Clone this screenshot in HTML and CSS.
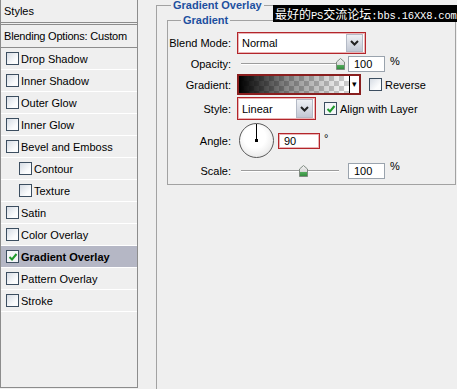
FILE: index.html
```html
<!DOCTYPE html>
<html lang="zh">
<head>
  <meta charset="UTF-8">
  <title>Layer Style - Gradient Overlay</title>
  <link rel="stylesheet" href="styles.css">
</head>
<body>
  <div class="dialog">
    <aside class="styles-panel">
      <div class="panel-head">Styles</div>
      <div class="panel-blend">Blending Options: Custom</div>
      <ul class="fx-list">
        <li><span class="cb"></span>Drop Shadow</li>
        <li><span class="cb"></span>Inner Shadow</li>
        <li><span class="cb"></span>Outer Glow</li>
        <li><span class="cb"></span>Inner Glow</li>
        <li><span class="cb"></span>Bevel and Emboss</li>
        <li class="sub"><span class="cb"></span>Contour</li>
        <li class="sub"><span class="cb"></span>Texture</li>
        <li><span class="cb"></span>Satin</li>
        <li><span class="cb"></span>Color Overlay</li>
        <li class="active"><span class="cb checked"><svg width="10" height="10" viewBox="0 0 10 10"><path d="M1.5 5 L4 7.5 L8.5 2" fill="none" stroke="#1f9a2c" stroke-width="2"/></svg></span>Gradient Overlay</li>
        <li><span class="cb"></span>Pattern Overlay</li>
        <li><span class="cb"></span>Stroke</li>
      </ul>
    </aside>

    <main class="options">
      <fieldset class="group outer">
        <legend>Gradient Overlay</legend>
        <fieldset class="group inner">
          <legend>Gradient</legend>
          <div class="form">
            <label class="lbl">Blend Mode:</label>
            <div class="ctl">
              <div class="select hot blend"><span>Normal</span><span class="drop"><svg width="9" height="6" viewBox="0 0 9 6"><path d="M1 1 L4.5 4.5 L8 1" fill="none" stroke="#222" stroke-width="2"/></svg></span></div>
            </div>

            <label class="lbl">Opacity:</label>
            <div class="ctl">
              <div class="slider"><div class="track"></div><svg class="thumb" style="left: 99px" width="9" height="12" viewBox="0 0 9 12"><defs><linearGradient id="tg1" x1="0" y1="0" x2="0" y2="1"><stop offset="0" stop-color="#f4f4f4"/><stop offset="0.55" stop-color="#d8d8d8"/><stop offset="0.56" stop-color="#58b060"/><stop offset="1" stop-color="#2f8a3a"/></linearGradient></defs><path d="M0.5 4 L4.5 0.5 L8.5 4 V11.5 H0.5 Z" fill="url(#tg1)" stroke="#7f8a80"/></svg></div>
              <div class="num">100</div><span class="unit">%</span>
            </div>

            <label class="lbl">Gradient:</label>
            <div class="ctl">
              <div class="swatch"><div class="ramp"></div><span class="swatch-drop">&#9662;</span></div>
              <span class="cb opt"></span><span class="opt-text">Reverse</span>
            </div>

            <label class="lbl">Style:</label>
            <div class="ctl">
              <div class="select hot style"><span>Linear</span><span class="drop tall"><svg width="9" height="6" viewBox="0 0 9 6"><path d="M1 1 L4.5 4.5 L8 1" fill="none" stroke="#222" stroke-width="2"/></svg></span></div>
              <span class="cb opt checked"><svg width="10" height="10" viewBox="0 0 10 10"><path d="M1.5 5 L4 7.5 L8.5 2" fill="none" stroke="#1f9a2c" stroke-width="2"/></svg></span><span class="opt-text">Align with Layer</span>
            </div>

            <label class="lbl">Angle:</label>
            <div class="ctl">
              <div class="dial"><span class="hand"></span><span class="pivot"></span></div>
              <div class="num hot angle">90</div><span class="unit deg">&deg;</span>
            </div>

            <label class="lbl">Scale:</label>
            <div class="ctl">
              <div class="slider"><div class="track"></div><svg class="thumb" style="left: 62px" width="9" height="12" viewBox="0 0 9 12"><defs><linearGradient id="tg2" x1="0" y1="0" x2="0" y2="1"><stop offset="0" stop-color="#f4f4f4"/><stop offset="0.55" stop-color="#d8d8d8"/><stop offset="0.56" stop-color="#58b060"/><stop offset="1" stop-color="#2f8a3a"/></linearGradient></defs><path d="M0.5 4 L4.5 0.5 L8.5 4 V11.5 H0.5 Z" fill="url(#tg2)" stroke="#7f8a80"/></svg></div>
              <div class="num">100</div><span class="unit">%</span>
            </div>
          </div>
        </fieldset>
      </fieldset>
    </main>

    <div class="watermark">最好的<span class="lat">PS</span>交流论坛<span class="lat">:bbs.16XX8.com</span></div>
  </div>
</body>
</html>
```

FILE: styles.css
```css
body {
  margin: 0;
  background: #efefef;
  font-family: Tahoma, "Liberation Sans", Arial, sans-serif;
  font-size: 11px;
  color: #000;
  overflow: hidden;
}
.dialog { display: flex; height: 389px; position: relative; }

/* left list of effects */
.styles-panel {
  flex: none;
  width: 136px;
  height: 387px;
  border: 1px solid #8c8c8c;
  border-top: none;
  background: #efefef;
}
.panel-head {
  height: 22px;
  line-height: 22px;
  padding-left: 3px;
  border-bottom: 3px double #8c8c8c;
}
.panel-blend {
  height: 22px;
  line-height: 22px;
  padding-left: 3px;
  border-bottom: 1px solid #8c8c8c;
  white-space: nowrap;
  letter-spacing: -0.2px;
}
.fx-list { list-style: none; margin: 0; padding: 0; }
.fx-list li {
  display: flex;
  align-items: center;
  height: 21px;
  padding-left: 5px;
  border-bottom: 1px solid #fff;
  white-space: nowrap;
}
.fx-list li.sub { padding-left: 18px; }
.fx-list li.active { background: #b5b7c5; font-weight: bold; }

.cb {
  width: 11px;
  height: 11px;
  border: 1px solid #3c4e60;
  background: linear-gradient(135deg, #d6dce4, #fbfcfd 70%);
  margin-right: 2px;
  flex: none;
  display: flex;
  align-items: center;
  justify-content: center;
}
.cb.checked { background: #f4f6f8; }

/* right options */
.options { flex: none; padding-left: 18px; }
.group { margin: 0; border: 1px solid #a2a2a2; }
.group legend { padding: 0 2px; font-weight: bold; color: #1d4f9f; line-height: 13px; }
.outer {
  width: 320px;
  height: 400px;
  box-sizing: border-box;
  padding: 0 0 0 10px;
}
.outer > legend { margin-left: 4px; line-height: 11px; }
.inner {
  margin-top: 3px;
  width: 289px;
  box-sizing: border-box;
  padding: 0 0 1px 0;
}
.inner > legend { margin-left: 13px; }

.form {
  display: grid;
  grid-template-columns: 63px 1fr;
  grid-template-rows: 22px 20px 21px 27px 37px 24px;
  column-gap: 6px;
  padding-top: 5px;
}
.lbl { text-align: right; align-self: center; white-space: nowrap; }
.ctl { display: flex; align-items: center; white-space: nowrap; }

.hot { border: 1px solid #b3262b; box-shadow: inset 0 0 0 1px #eab4b6; background: #fff; }
.select {
  box-sizing: border-box;
  display: flex;
  align-items: center;
  justify-content: space-between;
  padding-left: 4px;
}
.select.blend { width: 129px; height: 22px; }
.select.style { width: 79px; height: 23px; }
.drop {
  width: 15px;
  height: 16px;
  margin-right: 2px;
  border: 1px solid #b4bac6;
  background: linear-gradient(#eef0f4, #c3c8d4);
  display: flex;
  align-items: center;
  justify-content: center;
}
.drop.tall { height: 17px; }

.slider { position: relative; width: 108px; height: 14px; }
.track {
  position: absolute;
  left: 4px;
  right: 6px;
  top: 6px;
  height: 0;
  border-top: 1px solid #9c9c9c;
  border-bottom: 1px solid #fff;
}
.thumb { position: absolute; top: 1px; }

.num {
  box-sizing: border-box;
  width: 37px;
  height: 16px;
  line-height: 14px;
  padding-left: 5px;
  margin-left: 3px;
  border: 1px solid #9aa3ad;
  background: #fff;
}
.num.angle { width: 42px; margin-left: 4px; border-color: #b3262b; }
.unit { align-self: flex-start; margin-left: 5px; padding-top: 1px; }
.unit.deg { margin-left: 4px; padding-top: 10px; }

.swatch {
  box-sizing: border-box;
  width: 124px;
  height: 21px;
  border: 2px solid #8a1f1f;
  display: flex;
}
.ramp {
  flex: 1;
  background:
    linear-gradient(to right, #000, rgba(0, 0, 0, 0.45) 45%, rgba(0, 0, 0, 0)),
    conic-gradient(#fff 25%, #cfcfcf 0 50%, #fff 0 75%, #cfcfcf 0) 0 0 / 10px 10px;
}
.swatch-drop {
  width: 9px;
  border-left: 1px solid #000;
  background: #fff;
  font-size: 9px;
  line-height: 17px;
  text-align: center;
}
.opt { margin-left: 8px; }
.opt-text { margin-left: 1px; }

.dial {
  position: relative;
  box-sizing: border-box;
  width: 35px;
  height: 35px;
  margin-left: 2px;
  border: 1px solid #5a5a5a;
  border-radius: 50%;
  background: radial-gradient(circle at 45% 40%, #fff 40%, #dcdcdc);
}
.hand { position: absolute; left: 16px; top: 0; width: 1px; height: 17px; background: #000; }
.pivot { position: absolute; left: 15px; top: 15px; width: 3px; height: 3px; background: #000; }

.watermark {
  position: absolute;
  left: 273px;
  right: 0;
  top: 5px;
  height: 17px;
  line-height: 17px;
  padding-left: 2px;
  background: #000;
  color: #fff;
  font-family: "Noto Sans CJK SC", sans-serif;
  font-size: 12px;
  white-space: nowrap;
}
.watermark .lat { font-family: "Liberation Mono", monospace; font-size: 10.5px; letter-spacing: -0.2px; }
```
